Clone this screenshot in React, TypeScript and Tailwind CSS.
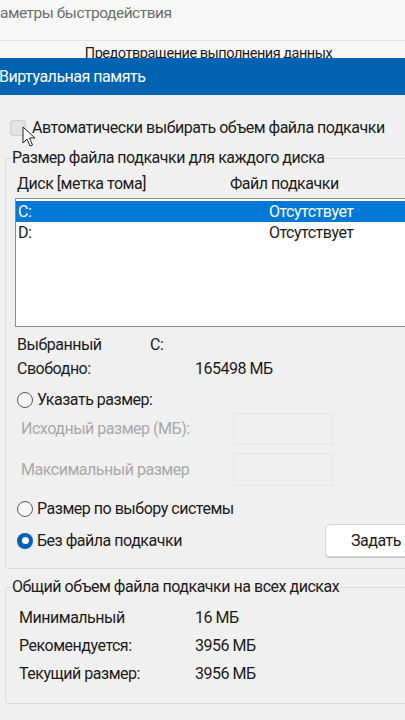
import React from "react";

const font = { fontFamily: "Roboto, 'Noto Sans', sans-serif" };

const Radio = ({ checked }: { checked?: boolean }) =>
  checked ? (
    <span className="w-4 h-4 rounded-full bg-[#005fb8] flex items-center justify-center shrink-0">
      <span className="w-[7px] h-[7px] rounded-full bg-white" />
    </span>
  ) : (
    <span className="w-4 h-4 rounded-full border border-[#5a5a5a] bg-[#f7f7f7] shrink-0" />
  );

const Cursor = () => (
  <svg
    className="absolute left-[22px] top-[126px]"
    width="14"
    height="22"
    viewBox="0 0 14 22"
  >
    <path
      d="M1 1 L1 17 L5 13 L8 20 L10.5 19 L7.5 12 L13 12 Z"
      fill="white"
      stroke="#222"
      strokeWidth="1"
      strokeLinejoin="round"
    />
  </svg>
);

export default function App() {
  return (
    <div
      className="relative w-[405px] h-[720px] overflow-hidden bg-[#f0f0f0] text-[#1b1b1b] text-[16px] tracking-[-0.03em] whitespace-nowrap"
      style={font}
    >
      {/* parent window behind */}
      <div className="h-[58px] overflow-hidden bg-[#f8f8f8]">
        <div className="h-[40px] pt-[1px] leading-6 text-[#6e6e6e] text-[15.5px]">
          аметры быстродействия
        </div>
        <div className="border-t border-[#e2e2e2] pt-[1px] pl-[12px] text-center leading-6 text-[14.5px]">
          Предотвращение выполнения данных
        </div>
      </div>

      {/* title bar */}
      <div className="h-[37px] bg-[#0063b1] text-white flex items-center -ml-[1px]">
        Виртуальная память
      </div>

      {/* auto checkbox */}
      <div className="mt-[21px] h-6 flex items-center pl-[10px] gap-[6px]">
        <span className="w-4 h-4 rounded-[3px] bg-[#e4e4e4] border border-[#cfcfcf] shrink-0" />
        <span>Автоматически выбирать объем файла подкачки</span>
      </div>
      <Cursor />

      {/* per-disk group */}
      <fieldset className="mt-[6px] ml-[5px] -mr-4 border border-[#dadada] rounded-[3px] pb-[11px]">
        <legend className="ml-[5px] px-[1px] leading-6">
          Размер файла подкачки для каждого диска
        </legend>
        <div className="pl-[9px]">
          <div className="mt-[2px] h-6 flex items-center pl-[2px]">
            <span className="w-[213px]">Диск [метка тома]</span>
            <span>Файл подкачки</span>
          </div>
          <div className="mt-[2px] h-[129px] bg-white border border-[#8f8f8f] pt-[2px]">
            <div className="h-[21px] bg-[#0078d7] text-white flex items-center pl-[2px]">
              <span className="w-[251px]">C:</span>
              <span>Отсутствует</span>
            </div>
            <div className="h-[21px] flex items-center pl-[2px]">
              <span className="w-[251px]">D:</span>
              <span>Отсутствует</span>
            </div>
          </div>

          <div className="mt-[6px] h-6 flex items-center pl-[2px]">
            <span className="w-[133px]">Выбранный</span>
            <span>C:</span>
          </div>
          <div className="h-6 flex items-center pl-[2px]">
            <span className="w-[178px]">Свободно:</span>
            <span>165498 МБ</span>
          </div>

          <div className="mt-[7px] h-6 flex items-center pl-[2px] gap-1">
            <Radio />
            <span>Указать размер:</span>
          </div>
          <div className="mt-[1px] h-8 flex items-center pl-[6px] text-[#a8a8a8]">
            <span className="w-[212px]">Исходный размер (МБ):</span>
            <span className="w-[100px] h-8 border border-[#e4e4e4] bg-[#efefef]" />
          </div>
          <div className="mt-[8px] h-[33px] flex items-center pl-[6px] text-[#a8a8a8]">
            <span className="w-[212px]">Максимальный размер</span>
            <span className="w-[100px] h-[33px] border border-[#e4e4e4] bg-[#efefef]" />
          </div>

          <div className="mt-[11px] h-6 flex items-center pl-[2px] gap-1">
            <Radio />
            <span>Размер по выбору системы</span>
          </div>
          <div className="mt-[3px] h-[33px] flex items-center pl-[2px]">
            <div className="w-[308px] flex items-center gap-1">
              <Radio checked />
              <span>Без файла подкачки</span>
            </div>
            <button className="h-[33px] w-[90px] bg-[#fdfdfd] border border-[#d5d5d5] rounded-[4px] text-left pl-[25px] shadow-[0_1px_0_#c8c8c8]">
              Задать
            </button>
          </div>
        </div>
      </fieldset>

      {/* totals group */}
      <fieldset className="mt-[6px] ml-[5px] -mr-4 border border-[#dadada] rounded-[3px] pb-[15px]">
        <legend className="ml-[5px] px-[1px] leading-6">
          Общий объем файла подкачки на всех дисках
        </legend>
        <div className="mt-[5px] pl-[13px]">
          <div className="h-7 flex items-center">
            <span className="w-[176px]">Минимальный</span>
            <span>16 МБ</span>
          </div>
          <div className="h-7 flex items-center">
            <span className="w-[176px]">Рекомендуется:</span>
            <span>3956 МБ</span>
          </div>
          <div className="h-7 flex items-center">
            <span className="w-[176px]">Текущий размер:</span>
            <span>3956 МБ</span>
          </div>
        </div>
      </fieldset>
    </div>
  );
}
